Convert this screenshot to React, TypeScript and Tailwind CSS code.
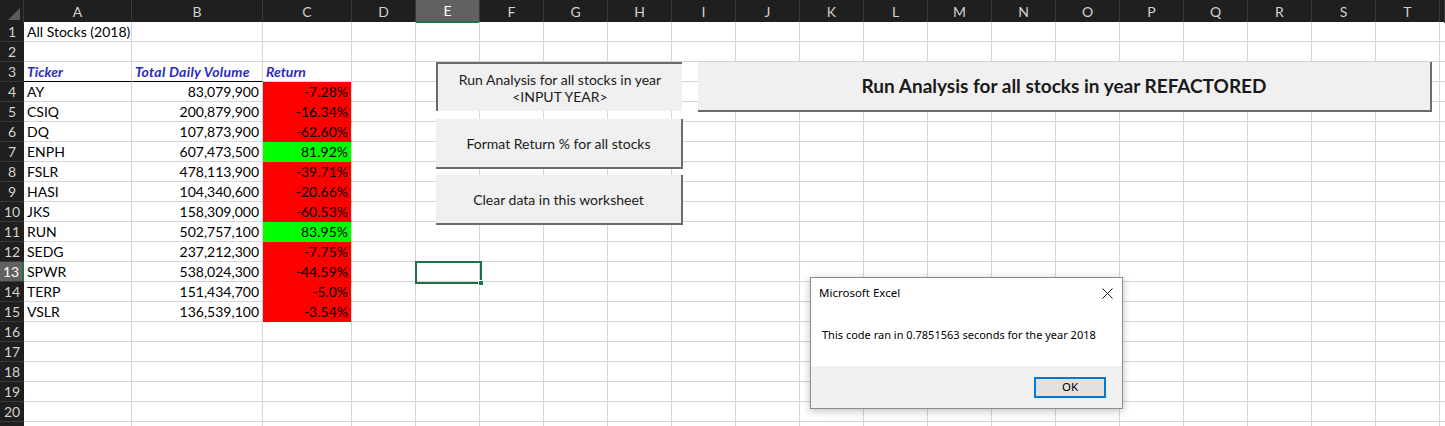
import React from "react";

const cols = ["A", "B", "C", "D", "E", "F", "G", "H", "I", "J", "K", "L", "M", "N", "O", "P", "Q", "R", "S", "T", ""];

type Stock = { ticker: string; volume: string; ret: string; up: boolean };

const stocks: Stock[] = [
  { ticker: "AY", volume: "83,079,900", ret: "-7.28%", up: false },
  { ticker: "CSIQ", volume: "200,879,900", ret: "-16.34%", up: false },
  { ticker: "DQ", volume: "107,873,900", ret: "-62.60%", up: false },
  { ticker: "ENPH", volume: "607,473,500", ret: "81.92%", up: true },
  { ticker: "FSLR", volume: "478,113,900", ret: "-39.71%", up: false },
  { ticker: "HASI", volume: "104,340,600", ret: "-20.66%", up: false },
  { ticker: "JKS", volume: "158,309,000", ret: "-60.53%", up: false },
  { ticker: "RUN", volume: "502,757,100", ret: "83.95%", up: true },
  { ticker: "SEDG", volume: "237,212,300", ret: "-7.75%", up: false },
  { ticker: "SPWR", volume: "538,024,300", ret: "-44.59%", up: false },
  { ticker: "TERP", volume: "151,434,700", ret: "-5.0%", up: false },
  { ticker: "VSLR", volume: "136,539,100", ret: "-3.54%", up: false },
];

const gridCols = "grid grid-cols-[24px_108px_131px_89px_repeat(17,64px)_1fr]";

const Cell = ({ children, className = "" }: { children?: React.ReactNode; className?: string }) => (
  <div className={`h-5 border-r border-b border-[#d4d4d4] px-[3px] flex items-center whitespace-nowrap overflow-visible ${className}`}>
    {children}
  </div>
);

const Empty = ({ n }: { n: number }) => (
  <>
    {Array.from({ length: n }).map((_, i) => (
      <Cell key={i} />
    ))}
  </>
);

const RowHead = ({ n }: { n?: number }) => (
  <div
    className={`h-5 flex items-center justify-center border-b border-[#3a3a3a] text-[14px] ${
      n === 13 ? "bg-[#616161] text-white border-r-2 border-r-[#1e7145]" : "bg-[#1f1f1f] text-[#d2d2d2]"
    }`}
  >
    {n}
  </div>
);

const ExcelButton = ({
  className,
  children,
}: {
  className: string;
  children: React.ReactNode;
}) => (
  <div className={`absolute bg-[#f0f0f0] flex flex-col items-center justify-center text-center text-[#1a1a1a] ${className}`}>
    {children}
  </div>
);

export default function App() {
  return (
    <div className="relative w-[1445px] h-[426px] overflow-hidden bg-white font-['Lato','Open_Sans',sans-serif] text-[14px] text-black">
      {/* COLUMN HEADERS */}
      <div className={`${gridCols} h-[22px] bg-[#1f1f1f]`}>
        <div className="relative border-r border-[#3a3a3a]">
          <svg className="absolute right-[3px] bottom-[3px]" width="12" height="12" viewBox="0 0 12 12">
            <polygon points="12,0 12,12 0,12" fill="#5c5c5c" />
          </svg>
        </div>
        {cols.map((c, i) => (
          <div
            key={i}
            className={`flex items-center justify-center border-r border-[#3a3a3a] text-[14px] ${
              c === "E" ? "bg-[#616161] text-white border-b-2 border-b-[#1e7145]" : "text-[#d2d2d2]"
            }`}
          >
            {c}
          </div>
        ))}
      </div>

      {/* SHEET ROWS */}
      <div className={gridCols}>
        <RowHead n={1} />
        <Cell>All Stocks (2018)</Cell>
        <Empty n={20} />

        <RowHead n={2} />
        <Empty n={21} />

        <RowHead n={3} />
        <Cell className="font-bold italic text-[#2b2bc4] border-b-black">Ticker</Cell>
        <Cell className="font-bold italic text-[#2b2bc4] border-b-black tracking-[0.3px]">Total Daily Volume</Cell>
        <Cell className="font-bold italic text-[#2b2bc4]">Return</Cell>
        <Empty n={18} />

        {stocks.map((s, i) => (
          <React.Fragment key={s.ticker}>
            <RowHead n={i + 4} />
            <Cell>{s.ticker}</Cell>
            <Cell className="justify-end">{s.volume}</Cell>
            <Cell
              className={`justify-end ${
                s.up ? "bg-[#00ff00] border-b-[#00ff00]" : "bg-[#ff0000] border-b-[#ff0000]"
              } ${i === stocks.length - 1 ? "border-b-[#d4d4d4]" : ""}`}
            >
              {s.ret}
            </Cell>
            <Empty n={18} />
          </React.Fragment>
        ))}

        {[16, 17, 18, 19, 20].map((n) => (
          <React.Fragment key={n}>
            <RowHead n={n} />
            <Empty n={21} />
          </React.Fragment>
        ))}
        <RowHead />
        <Empty n={21} />
      </div>

      {/* BUTTONS */}
      <ExcelButton className="left-[436px] top-[62px] w-[246px] h-[49px] border-t-2 border-l-2 border-[#6b6b6b] leading-[17px]">
        <span>Run Analysis for all stocks in year</span>
        <span>&lt;INPUT YEAR&gt;</span>
      </ExcelButton>
      <ExcelButton className="left-[436px] top-[119px] w-[247px] h-[50px] border-r-2 border-b-2 border-[#6b6b6b]">
        Format Return % for all stocks
      </ExcelButton>
      <ExcelButton className="left-[436px] top-[175px] w-[247px] h-[50px] border-r-2 border-b-2 border-[#6b6b6b]">
        Clear data in this worksheet
      </ExcelButton>
      <ExcelButton className="left-[698px] top-[62px] w-[734px] h-[50px] border-r-2 border-b-2 border-[#6b6b6b] text-[19px] font-bold">
        Run Analysis for all stocks in year REFACTORED
      </ExcelButton>

      {/* SELECTED CELL E13 */}
      <div className="absolute left-[415px] top-[261px] w-[67px] h-[23px] border-2 border-[#1e7145]">
        <div className="absolute -right-[4px] -bottom-[4px] w-[6px] h-[6px] bg-[#1e7145] border border-white" />
      </div>

      {/* MESSAGE BOX */}
      <div className="absolute left-[810px] top-[277px] w-[313px] h-[132px] bg-white border border-[#8c8c8c] shadow-[0_2px_8px_rgba(0,0,0,0.25)] flex flex-col font-['Noto_Sans','Open_Sans',sans-serif] text-[11px] text-black">
        <div className="h-[30px] flex items-center justify-between pl-[8px] pr-[9px]">
          <span className="text-[11.5px]">Microsoft Excel</span>
          <svg width="11" height="11" viewBox="0 0 11 11">
            <path d="M0.5 0.5 L10.5 10.5 M10.5 0.5 L0.5 10.5" stroke="#111" strokeWidth="1" />
          </svg>
        </div>
        <div className="flex-1 flex items-center pl-[11px] pb-[4px]">
          This code ran in 0.7851563 seconds for the year 2018
        </div>
        <div className="h-[42px] bg-[#f0f0f0] flex items-center justify-end pr-[16px]">
          <div className="w-[72px] h-[21px] border-2 border-[#0078d7] bg-[#e1e1e1] flex items-center justify-center text-[11.5px]">
            OK
          </div>
        </div>
      </div>
    </div>
  );
}
